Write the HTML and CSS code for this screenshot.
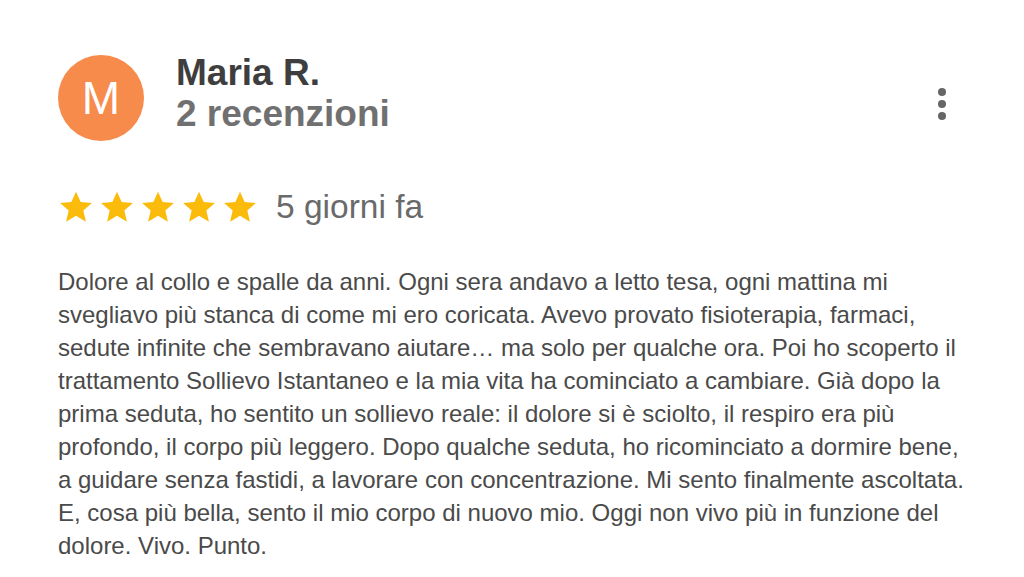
FILE: index.html
```html
<!DOCTYPE html>
<html lang="it">
<head>
<meta charset="utf-8">
<link rel="stylesheet" href="styles.css">
</head>
<body>
<div class="review">
  <div class="head">
    <div class="avatar">M</div>
    <div class="who">
      <div class="name">Maria R.</div>
      <div class="count">2 recenzioni</div>
    </div>
    <div class="more"><span></span><span></span><span></span></div>
  </div>
  <div class="rating">
    <div class="stars">
      <svg viewBox="0 0 24 24" class="star"><path d="M12 1.8l3.1 6.9 7.5.7-5.7 5 1.7 7.4L12 17.9l-6.6 3.9 1.7-7.4-5.7-5 7.5-.7z"/></svg>
      <svg viewBox="0 0 24 24" class="star"><path d="M12 1.8l3.1 6.9 7.5.7-5.7 5 1.7 7.4L12 17.9l-6.6 3.9 1.7-7.4-5.7-5 7.5-.7z"/></svg>
      <svg viewBox="0 0 24 24" class="star"><path d="M12 1.8l3.1 6.9 7.5.7-5.7 5 1.7 7.4L12 17.9l-6.6 3.9 1.7-7.4-5.7-5 7.5-.7z"/></svg>
      <svg viewBox="0 0 24 24" class="star"><path d="M12 1.8l3.1 6.9 7.5.7-5.7 5 1.7 7.4L12 17.9l-6.6 3.9 1.7-7.4-5.7-5 7.5-.7z"/></svg>
      <svg viewBox="0 0 24 24" class="star"><path d="M12 1.8l3.1 6.9 7.5.7-5.7 5 1.7 7.4L12 17.9l-6.6 3.9 1.7-7.4-5.7-5 7.5-.7z"/></svg>
    </div>
    <div class="when">5 giorni fa</div>
  </div>
  <p class="text">Dolore al collo e spalle da anni. Ogni sera andavo a letto tesa, ogni mattina mi<br>
svegliavo più stanca di come mi ero coricata. Avevo provato fisioterapia, farmaci,<br>
sedute infinite che sembravano aiutare… ma solo per qualche ora. Poi ho scoperto il<br>
trattamento Sollievo Istantaneo e la mia vita ha cominciato a cambiare. Già dopo la<br>
prima seduta, ho sentito un sollievo reale: il dolore si è sciolto, il respiro era più<br>
profondo, il corpo più leggero. Dopo qualche seduta, ho ricominciato a dormire bene,<br>
a guidare senza fastidi, a lavorare con concentrazione. Mi sento finalmente ascoltata.<br>
E, cosa più bella, sento il mio corpo di nuovo mio. Oggi non vivo più in funzione del<br>
dolore. Vivo. Punto.</p>
</div>
</body>
</html>
```

FILE: styles.css
```css
html, body {
  margin: 0;
  padding: 0;
  background: #ffffff;
}
body {
  font-family: "Liberation Sans", Arial, sans-serif;
  width: 1024px;
  height: 577px;
  overflow: hidden;
}
.review {
  padding: 55px 0 0 58px;
}
.head {
  display: flex;
  align-items: flex-start;
}
.avatar {
  width: 86px;
  height: 86px;
  border-radius: 50%;
  background: #f68b4c;
  color: #ffffff;
  font-size: 46px;
  line-height: 86px;
  text-align: center;
  flex: none;
}
.who {
  margin-left: 32px;
  margin-top: -2px;
  flex: 1;
}
.name {
  font-weight: bold;
  font-size: 37px;
  line-height: 40px;
  color: #3e3e3e;
}
.count {
  font-weight: bold;
  font-size: 37px;
  line-height: 42px;
  color: #707070;
}
.more {
  display: flex;
  flex-direction: column;
  gap: 4px;
  margin: 33px 78px 0 0;
}
.more span {
  width: 8px;
  height: 8px;
  border-radius: 50%;
  background: #666666;
}
.rating {
  display: flex;
  align-items: center;
  margin-top: 47px;
}
.stars {
  display: flex;
  gap: 5px;
}
.star {
  width: 36px;
  height: 36px;
  fill: #fbbb0a;
}
.when {
  margin-left: 18px;
  font-size: 33.5px;
  color: #6a6a6a;
}
.text {
  margin: 39px 0 0 0;
  width: 940px;
  white-space: nowrap;
  font-size: 24px;
  line-height: 33px;
  color: #4a4a4a;
}
```
